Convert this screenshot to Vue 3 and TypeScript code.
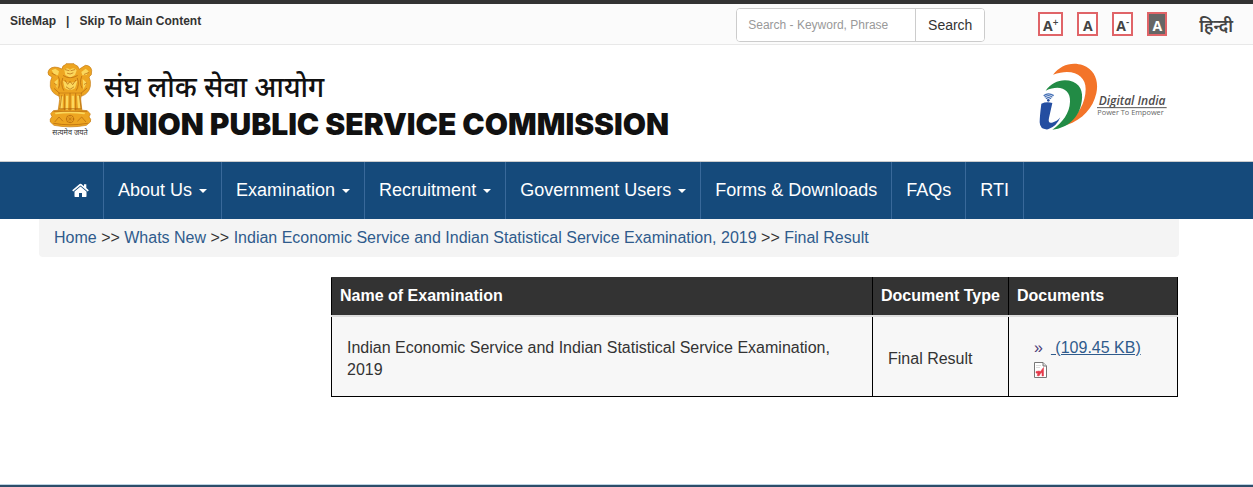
<script setup lang="ts">
import { ref } from 'vue'

interface NavItem {
  label: string
  menu: boolean
}

interface ExamRow {
  name: string
  type: string
  size: string
}

const query = ref('')

const navItems: NavItem[] = [
  { label: 'About Us', menu: true },
  { label: 'Examination', menu: true },
  { label: 'Recruitment', menu: true },
  { label: 'Government Users', menu: true },
  { label: 'Forms & Downloads', menu: false },
  { label: 'FAQs', menu: false },
  { label: 'RTI', menu: false },
]

const crumbs: string[] = [
  'Home',
  'Whats New',
  'Indian Economic Service and Indian Statistical Service Examination, 2019',
  'Final Result',
]

const rows: ExamRow[] = [
  {
    name: 'Indian Economic Service and Indian Statistical Service Examination, 2019',
    type: 'Final Result',
    size: '(109.45 KB)',
  },
]
</script>

<template>
  <div class="page">
    <div class="topbar">
      <div class="skip">
        <a href="#sitemap">SiteMap</a>
        <span>|</span>
        <a href="#main">Skip To Main Content</a>
      </div>
      <form class="search" role="search" @submit.prevent>
        <input v-model="query" type="text" aria-label="Search" placeholder="Search - Keyword, Phrase" />
        <button type="submit">Search</button>
      </form>
      <div class="sizes">
        <button type="button" class="size larger">A<sup>+</sup></button>
        <button type="button" class="size">A</button>
        <button type="button" class="size">A<sup>-</sup></button>
        <button type="button" class="size contrast">A</button>
      </div>
      <a class="lang" href="#hindi" lang="hi">हिन्दी</a>
    </div>

    <header class="header">
      <a class="brand" href="#home">
        <svg class="emblem" width="46" height="76" viewBox="0 0 138 228" aria-hidden="true">
          <g fill="#eda521" stroke="#c47a12" stroke-width="2" stroke-linejoin="round">
            <path d="M45 18 Q46 7 54 6 L57 2 H81 L85 6 Q94 7 96 19 L115 7 Q131 7 134 22 L133 35 L126 42 Q133 55 130 70 Q125 92 105 99 L35 99 Q13 91 10 70 Q8 55 15 42 L5 36 Q0 28 7 19 Q20 6 45 18Z" />
            <path d="M35 90 H104 L101 108 L105 146 H33 L38 110Z" />
            <path d="M19 143 Q69 134 121 143 L130 153 L126 162 Q134 168 130 177 L118 187 Q69 196 21 187 L10 177 Q7 168 15 161 L11 152Z" />
          </g>
          <g fill="#fbd75c">
            <path d="M52 20 Q61 11 69 20 Q79 10 89 22 L84 36 L70 44 L55 36Z" />
            <path d="M14 22 L25 17 L36 25 L33 37 L21 34Z M103 27 L116 17 L125 25 L119 36 L106 37Z" />
            <path d="M48 53 Q67 65 91 53 L84 76 Q68 86 53 75Z M22 57 L33 48 L31 77Z M107 48 L119 59 L109 80Z" />
            <path d="M41 100 H48 L47 138 H38Z M57 98 H64 L63 140 H56Z M74 98 H81 L82 140 H74Z M90 98 H98 L101 137 H93Z" />
            <path d="M23 149 Q69 142 115 149 L112 154 Q68 148 26 154Z" />
          </g>
          <g fill="none" stroke="#b0640c" stroke-width="2" stroke-linecap="round">
            <path d="M55 20 L66 23 M83 20 L72 23 M61 31 Q69 36 78 30 M49 38 Q68 51 91 38 M47 46 Q40 65 50 82 M91 46 Q99 65 88 82 M34 41 Q43 57 35 75 M104 40 Q96 60 105 75 M15 31 L25 36 M112 34 L124 29 M22 77 L38 91 M102 91 L119 76" />
            <path d="M44 98 L39 135 M53 94 V141 M69 91 V142 M86 92 V141 M97 97 L102 135 M37 137 H103 M21 145 H119" />
            <path d="M54 52 L62 64 L69 55 L77 65 L86 52 M58 72 L69 79 L80 72 M23 62 L29 66 M112 64 L119 60" />
            <path d="M24 176 L36 162 L47 174 M92 174 L104 162 L116 176 M20 181 Q68 190 121 181" />
            <circle cx="69" cy="168" r="11" />
            <path d="M58 168 H80 M69 157 V179 M61 160 L77 176 M77 160 L61 176" stroke-width="1" />
          </g>
          <text x="69" y="215" text-anchor="middle" font-family="'Noto Sans Devanagari','Noto Sans',sans-serif" font-size="22" fill="#333">सत्यमेव जयते</text>
        </svg>
        <span class="titles">
          <span class="title-hi" lang="hi">संघ लोक सेवा आयोग</span>
          <span class="title-en">UNION PUBLIC SERVICE COMMISSION</span>
        </span>
      </a>
      <a class="digital" href="#digital-india" aria-label="Digital India">
        <svg width="132" height="70" viewBox="28 25 396 210" aria-hidden="true">
          <path d="M70 60 C92 32 126 20 160 32 C195 46 208 78 200 116 C190 160 159 195 111 211 C145 183 168 144 168 103 C168 62 130 39 70 60Z" fill="#f37429" />
          <path d="M48 108 C67 80 100 70 130 81 C157 92 162 121 154 151 C146 188 116 220 68 225 C98 203 120 176 121 141 C123 105 92 88 48 108Z" fill="#228b45" />
          <path d="M35 147 Q51 140 68 145 L58 190 Q54 207 67 204 Q82 201 92 188 Q81 216 55 224 Q31 226 30 203 Q30 186 35 147Z" fill="#244ea1" />
          <circle cx="56" cy="137" r="4" fill="#244ea1" />
          <path d="M49 132 Q56 126 64 132 M45 128 Q56 118 68 128 M42 123 Q56 112 72 123" fill="none" stroke="#426db4" stroke-width="4" />
          <text x="207" y="151" font-family="'Open Sans',sans-serif" font-size="36" font-style="italic" font-weight="600" fill="#4e4b4c">Digital India</text>
          <path d="M202 159 H411" stroke="#555" stroke-width="3" />
          <text x="203" y="182" font-family="'Open Sans',sans-serif" font-size="22" fill="#666">Power To Empower</text>
        </svg>
      </a>
    </header>

    <nav class="nav" aria-label="Main">
      <a href="#home" class="nav-item" aria-label="Home">
        <svg width="17" height="18" viewBox="0 0 17 18" fill="#fff" aria-hidden="true">
          <path d="M8.5 5.5 L14.5 10.5 V15 Q14.5 16 14 16 H10 V12 H7 V16 H3 Q2.5 16 2.5 15 V10.5Z" />
          <path d="M0.2 9.2 L7.6 3 Q8.5 2.3 9.4 3 L12 5.2 V3.2 H14.3 V7 L16.8 9.2 L15.8 10.4 L8.5 4.4 L1.2 10.4Z" />
        </svg>
      </a>
      <a v-for="item in navItems" :key="item.label" href="#" class="nav-item">
        {{ item.label }} <span v-if="item.menu" class="caret"></span>
      </a>
    </nav>

    <div class="container">
      <nav class="crumbs" aria-label="Breadcrumb">
        <template v-for="(crumb, i) in crumbs" :key="crumb">
          <span v-if="i > 0"> &gt;&gt; </span><a href="#">{{ crumb }}</a>
        </template>
      </nav>

      <main id="main" class="content">
        <table>
          <colgroup>
            <col />
            <col class="col-type" />
            <col class="col-docs" />
          </colgroup>
          <thead>
            <tr>
              <th scope="col">Name of Examination</th>
              <th scope="col">Document Type</th>
              <th scope="col">Documents</th>
            </tr>
          </thead>
          <tbody>
            <tr v-for="row in rows" :key="row.name">
              <td>{{ row.name }}</td>
              <td>{{ row.type }}</td>
              <td>
                <div class="doc">
                  <span class="marker">»</span>
                  <a href="#pdf">&nbsp;{{ row.size }}</a>
                </div>
                <div class="doc">
                  <svg width="13" height="16" viewBox="0 0 13 16" aria-hidden="true">
                    <path d="M0.5 0.5 H9 L12.5 4 V15.5 H0.5Z" fill="#fff" stroke="#777" />
                    <path d="M9 0.5 V4 H12.5" fill="#ddd" stroke="#777" />
                    <path d="M2 3.5 H7 M2 5.5 H6" stroke="#ddd" />
                    <path d="M2 9.5 L5 9 L6.5 9.5 L9.5 5.5 V14 H8 V10.5 L6.5 11.5 L5 14 L3 13.5 L4 11.5 L2 11Z" fill="#e43b4b" stroke="#e43b4b" stroke-width="0.5" />
                  </svg>
                </div>
              </td>
            </tr>
          </tbody>
        </table>
      </main>
    </div>

    <footer class="footer"></footer>
  </div>
</template>

<style>
body {
  margin: 0;
  background: #fff;
}
</style>

<style scoped>
.page {
  display: flex;
  flex-direction: column;
  min-height: 100vh;
  font-family: 'Liberation Sans', Arial, sans-serif;
  font-size: 16px;
  line-height: 22px;
  color: #333;
}

.page * {
  box-sizing: border-box;
}

a {
  color: #2f5b8c;
  text-decoration: none;
}

.topbar {
  display: flex;
  align-items: flex-start;
  height: 45px;
  padding: 4px 20px 0 10px;
  border-top: 4px solid #333;
  border-bottom: 1px solid #e8e8e8;
  background: #fbfbfb;
}

.skip {
  display: flex;
  gap: 10px;
  flex: 1;
  font-size: 12px;
  font-weight: bold;
  line-height: 26px;
}

.skip a {
  color: #333;
}

.search {
  display: flex;
  width: 249px;
  height: 34px;
  margin-right: 53px;
  border: 1px solid #ccc;
  border-radius: 4px;
  background: #fff;
  overflow: hidden;
}

.search input {
  flex: 1;
  min-width: 0;
  padding: 0 11px;
  border: 0;
  background: #fff;
  font: 12px 'Liberation Sans', Arial, sans-serif;
}

.search input::placeholder {
  color: #999;
}

.search button {
  width: 69px;
  padding: 0;
  border: 0;
  border-left: 1px solid #ccc;
  background: #fff;
  font: 14px 'Liberation Sans', Arial, sans-serif;
  color: #333;
}

.sizes {
  display: flex;
  gap: 14px;
  margin-top: 4px;
  margin-right: 32px;
}

.size {
  width: 21px;
  height: 24px;
  padding: 4px 0 0;
  border: 2px solid #e06468;
  background: #fff;
  font: bold 14px 'Open Sans', sans-serif;
  line-height: 16px;
  color: #444;
  text-align: center;
  white-space: nowrap;
}

.size.larger {
  width: 25px;
}

.size sup {
  font-size: 10px;
  font-weight: 600;
  line-height: 0;
  vertical-align: 5px;
}

.size.contrast {
  width: 20px;
  background: #666;
  color: #fff;
}

.lang {
  margin-top: 9px;
  font-family: 'Noto Sans Devanagari', 'Noto Sans', sans-serif;
  font-size: 17px;
  font-weight: 600;
  color: #444;
}

.header {
  display: flex;
  align-items: flex-start;
  justify-content: space-between;
  height: 117px;
  padding: 18px 82px 0 47px;
  border-bottom: 1px solid #ccc;
}

.brand {
  display: flex;
  gap: 11px;
  color: #111;
}

.emblem,
.digital svg {
  display: block;
}

.titles {
  display: flex;
  flex-direction: column;
  padding-top: 9px;
}

.title-hi {
  font-family: 'Noto Sans Devanagari', 'Noto Sans', sans-serif;
  font-size: 28px;
  font-weight: 500;
  line-height: 36px;
}

.title-en {
  font-family: Inter, 'Liberation Sans', sans-serif;
  font-size: 30px;
  font-weight: 900;
  line-height: 32px;
  white-space: nowrap;
}

.nav {
  display: flex;
  height: 57px;
  padding-left: 58px;
  background: #154a7b;
}

.nav-item {
  display: flex;
  align-items: center;
  padding: 0 14px 2px;
  border-right: 1px solid #39699a;
  font-size: 18px;
  color: #fff;
  white-space: nowrap;
}

.caret {
  margin-left: 7px;
  margin-top: 3px;
  border-top: 4px solid #fff;
  border-right: 4px solid transparent;
  border-left: 4px solid transparent;
}

.container {
  flex: 1;
  padding: 0 74px 0 39px;
}

.crumbs {
  padding: 8px 15px;
  border-radius: 0 0 4px 4px;
  background: #f4f4f4;
}

.content {
  margin: 20px 1px 0 292px;
}

table {
  width: 100%;
  border-collapse: collapse;
  background: #f7f7f7;
}

.col-type {
  width: 136px;
}

.col-docs {
  width: 169px;
}

th {
  padding: 7px 8px 8px;
  border: 1px solid #000;
  border-top-color: #333;
  border-bottom: 2px solid #ddd;
  background: #333;
  color: #fff;
  text-align: left;
  white-space: nowrap;
}

td {
  padding: 20px 15px 15px;
  border: 1px solid #000;
  border-top: 0;
}

td:last-child {
  padding-left: 25px;
}

.doc {
  display: flex;
  align-items: center;
  gap: 8px;
  height: 22px;
}

.doc a {
  text-decoration: underline;
}

.marker {
  color: #4b3b78;
}

.footer {
  height: 3px;
  border-top: 1px solid #bdd3e2;
  background: #2d4d69;
}
</style>
